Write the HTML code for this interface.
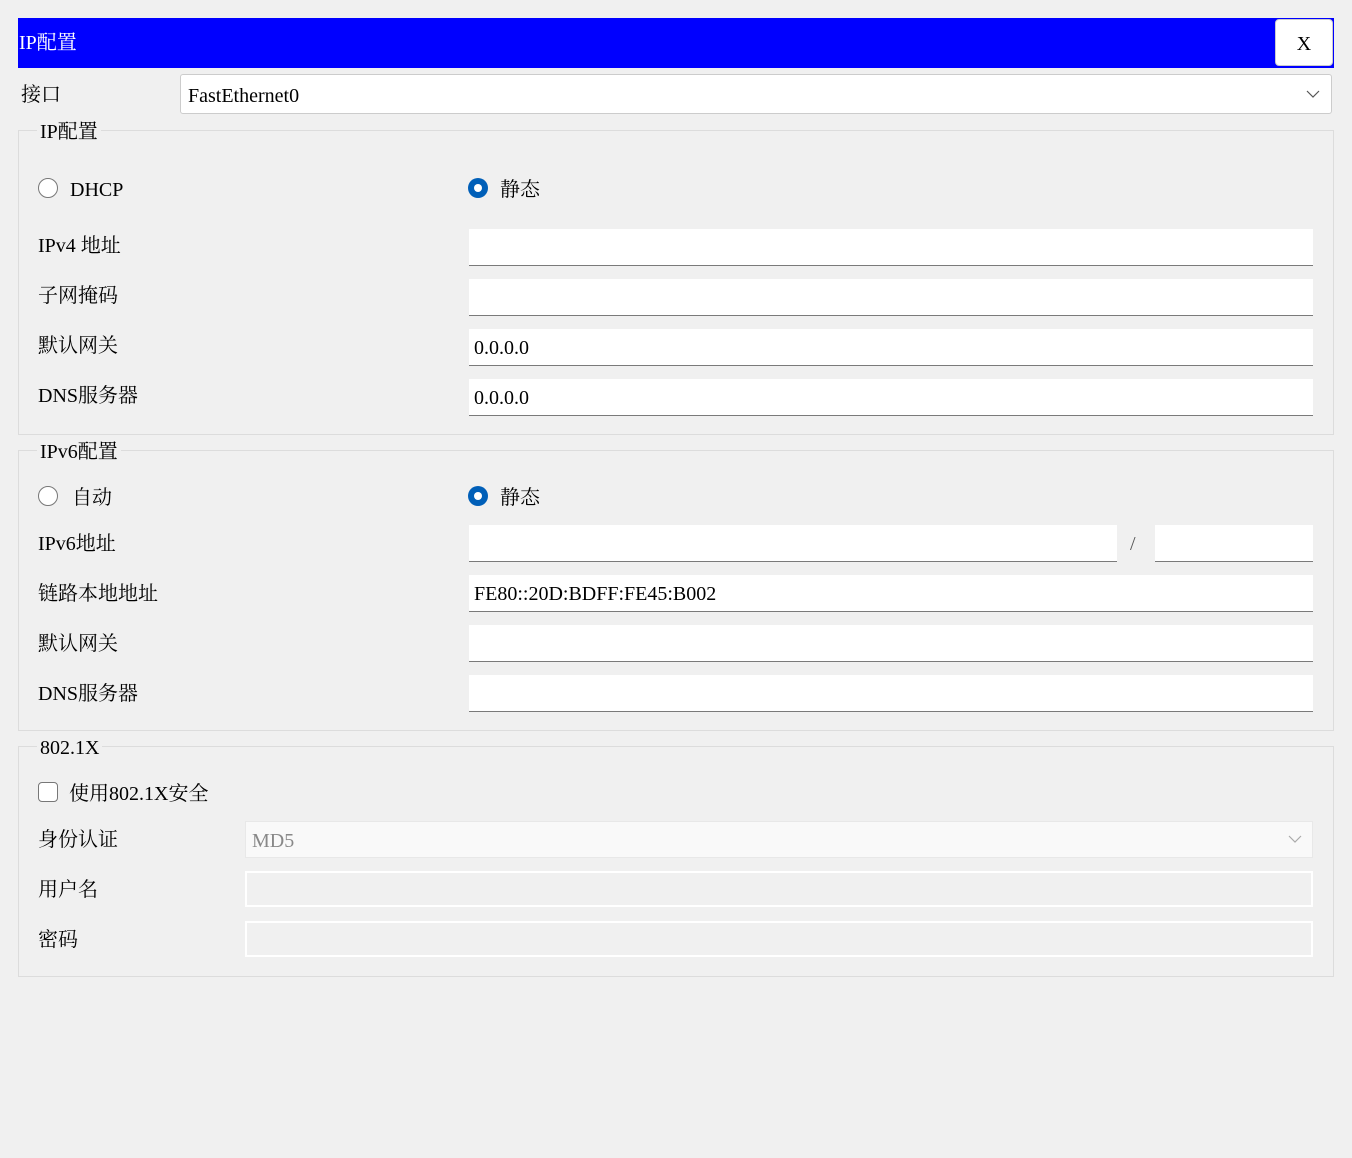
<!DOCTYPE html>
<html><head><meta charset="utf-8"><style>
*{margin:0;padding:0;box-sizing:border-box}
body{width:1352px;height:1158px;background:#f0f0f0;position:relative;overflow:hidden;font-family:"Liberation Serif","Noto Serif CJK SC",serif;font-size:20px;color:#000}
.a{position:absolute}
.t{position:absolute;line-height:24px;white-space:nowrap;margin-top:1px}
.grp{position:absolute;left:18px;width:1316px;border:1px solid #dcdcdc}
.lg{position:absolute;background:#f0f0f0;padding:0 3px;line-height:24px;margin-top:1px}
.in{position:absolute;left:469px;width:844px;height:37px;background:#fff;border-bottom:1px solid #7a7a7a;padding-left:5px;line-height:38px}
.ro{position:absolute;width:20px;height:20px;border-radius:50%;border:1px solid #777;background:#fff}
.rs{position:absolute;width:20px;height:20px;border-radius:50%;background:#005fb8}
.rs:after{content:"";position:absolute;left:6px;top:6px;width:8px;height:8px;border-radius:50%;background:#fff}
.dis{position:absolute;left:245px;width:1068px;height:36px;border:2px solid #fff;background:#f0f0f0}
</style></head><body>
<div class="a" style="left:18px;top:18px;width:1316px;height:50px;background:#0000ff"></div>
<div class="t" style="left:19px;top:30px;color:#fff">IP配置</div>
<div class="a" style="left:1275px;top:19px;width:58px;height:47px;background:#fff;border:1px solid #ccc;border-radius:4px;text-align:center;line-height:49px">X</div>

<div class="t" style="left:21px;top:82px">接口</div>
<div class="a" style="left:180px;top:74px;width:1152px;height:40px;background:#fff;border:1px solid #ccc;border-radius:3px"></div>
<div class="t" style="left:188px;top:83px">FastEthernet0</div>
<svg class="a" style="left:1306px;top:89px" width="14" height="10"><path d="M1 2 L7 8 L13 2" fill="none" stroke="#555" stroke-width="1.2"/></svg>

<div class="grp" style="top:130px;height:305px"></div>
<div class="lg a" style="left:37px;top:119px">IP配置</div>
<div class="ro" style="left:38px;top:178px"></div>
<div class="t" style="left:70px;top:177px">DHCP</div>
<div class="rs" style="left:468px;top:178px"></div>
<div class="t" style="left:500px;top:177px">静态</div>
<div class="t" style="left:38px;top:233px">IPv4 地址</div>
<div class="in" style="top:229px"></div>
<div class="t" style="left:38px;top:283px">子网掩码</div>
<div class="in" style="top:279px"></div>
<div class="t" style="left:38px;top:333px">默认网关</div>
<div class="in" style="top:329px">0.0.0.0</div>
<div class="t" style="left:38px;top:383px">DNS服务器</div>
<div class="in" style="top:379px">0.0.0.0</div>

<div class="grp" style="top:450px;height:281px"></div>
<div class="lg a" style="left:37px;top:439px">IPv6配置</div>
<div class="ro" style="left:38px;top:486px"></div>
<div class="t" style="left:72px;top:485px">自动</div>
<div class="rs" style="left:468px;top:486px"></div>
<div class="t" style="left:500px;top:485px">静态</div>
<div class="t" style="left:38px;top:531px">IPv6地址</div>
<div class="in" style="top:525px;width:648px"></div>
<div class="t" style="left:1130px;top:531px;color:#555">/</div>
<div class="in" style="top:525px;left:1155px;width:158px"></div>
<div class="t" style="left:38px;top:581px">链路本地地址</div>
<div class="in" style="top:575px">FE80::20D:BDFF:FE45:B002</div>
<div class="t" style="left:38px;top:631px">默认网关</div>
<div class="in" style="top:625px"></div>
<div class="t" style="left:38px;top:681px">DNS服务器</div>
<div class="in" style="top:675px"></div>

<div class="grp" style="top:746px;height:231px"></div>
<div class="lg a" style="left:37px;top:735px">802.1X</div>
<div class="a" style="left:38px;top:782px;width:20px;height:20px;border:1px solid #777;border-radius:4px;background:#fff"></div>
<div class="t" style="left:69px;top:781px">使用802.1X安全</div>
<div class="t" style="left:38px;top:827px">身份认证</div>
<div class="a" style="left:245px;top:821px;width:1068px;height:37px;background:#f9f9f9;border:1px solid #e8e8e8"></div>
<div class="t" style="left:252px;top:828px;color:#888">MD5</div>
<svg class="a" style="left:1288px;top:834px" width="14" height="10"><path d="M1 2 L7 8 L13 2" fill="none" stroke="#aaa" stroke-width="1.2"/></svg>
<div class="t" style="left:38px;top:877px">用户名</div>
<div class="dis" style="top:871px"></div>
<div class="t" style="left:38px;top:927px">密码</div>
<div class="dis" style="top:921px"></div>
</body></html>
